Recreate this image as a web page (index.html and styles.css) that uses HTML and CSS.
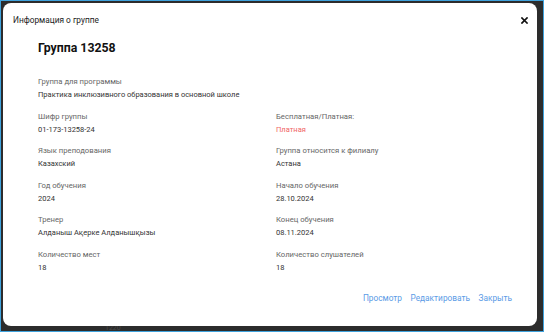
FILE: index.html
```html
<!DOCTYPE html>
<html lang="ru">
<head>
  <meta charset="UTF-8">
  <meta name="viewport" content="width=device-width, initial-scale=1.0">
  <title>Информация о группе</title>
  <link rel="stylesheet" href="styles.css">
</head>
<body>
  <div class="screen">
    <div class="overlay">
      <span class="behind">1220</span>
      <div class="modal">
        <div class="modal-header">
          <span class="modal-title">Информация о группе</span>
          <button class="close-btn" aria-label="Закрыть">
            <svg width="7" height="7" viewBox="0 0 7 7"><path d="M1 1L6 6M6 1L1 6" stroke="#111" stroke-width="1.7" stroke-linecap="square"/></svg>
          </button>
        </div>
        <div class="modal-body">
          <h1 class="group-title">Группа 13258</h1>
          <div class="fields">
            <div class="field full">
              <div class="label">Группа для программы</div>
              <div class="value">Практика инклюзивного образования в основной школе</div>
            </div>
            <div class="field">
              <div class="label">Шифр группы</div>
              <div class="value">01-173-13258-24</div>
            </div>
            <div class="field">
              <div class="label">Бесплатная/Платная:</div>
              <div class="value paid">Платная</div>
            </div>
            <div class="field">
              <div class="label">Язык преподования</div>
              <div class="value">Казахский</div>
            </div>
            <div class="field">
              <div class="label">Группа относится к филиалу</div>
              <div class="value">Астана</div>
            </div>
            <div class="field">
              <div class="label">Год обучения</div>
              <div class="value">2024</div>
            </div>
            <div class="field">
              <div class="label">Начало обучения</div>
              <div class="value">28.10.2024</div>
            </div>
            <div class="field">
              <div class="label">Тренер</div>
              <div class="value">Алданыш Ақерке Алданышқызы</div>
            </div>
            <div class="field">
              <div class="label">Конец обучения</div>
              <div class="value">08.11.2024</div>
            </div>
            <div class="field">
              <div class="label">Количество мест</div>
              <div class="value">18</div>
            </div>
            <div class="field">
              <div class="label">Количество слушателей</div>
              <div class="value">18</div>
            </div>
          </div>
        </div>
        <div class="modal-actions">
          <a href="#" class="action">Просмотр</a>
          <a href="#" class="action">Редактировать</a>
          <a href="#" class="action">Закрыть</a>
        </div>
      </div>
    </div>
  </div>
</body>
</html>
```

FILE: styles.css
```css
body {
  margin: 0;
  padding: 0;
  font-family: Roboto, "Liberation Sans", Arial, sans-serif;
  color: #222;
}
.screen {
  width: 544px;
  height: 332px;
  box-sizing: border-box;
  padding: 1px;
  background: #3fa2dc;
  display: flex;
}
.overlay {
  position: relative;
  flex: 1;
  display: flex;
  padding: 2px 6px 5px 2px;
  background: #2c2c2c;
}
.behind {
  position: absolute;
  left: 104px;
  bottom: -1px;
  font-size: 7px;
  line-height: 7px;
  color: #4a4a4a;
}
.modal {
  position: relative;
  flex: 1;
  display: flex;
  flex-direction: column;
  background: #fff;
  border-radius: 8px;
}
.modal-header {
  display: flex;
  align-items: center;
  justify-content: space-between;
  padding: 10px 9px 10px 10px;
  height: 14px;
}
.modal-title {
  font-size: 8.3px;
  color: #222;
}
.close-btn {
  border: none;
  background: none;
  padding: 0;
  display: flex;
  cursor: pointer;
}
.modal-body {
  padding: 1px 35px 0;
  flex: 1;
}
.group-title {
  margin: 0 0 17px;
  font-size: 12.3px;
  line-height: 20px;
  font-weight: bold;
  color: #111;
}
.fields {
  display: grid;
  grid-template-columns: 1fr 1fr;
  column-gap: 12px;
  row-gap: 8.5px;
}
.field.full {
  grid-column: 1 / 3;
}
.label {
  font-size: 7.7px;
  line-height: 13px;
  color: #666;
}
.value {
  font-size: 7.5px;
  line-height: 13px;
  color: #333;
}
.value.paid {
  color: #f06464;
}
.modal-actions {
  display: flex;
  justify-content: flex-end;
  gap: 8.5px;
  padding: 0 25px 21px 0;
}
.action {
  font-size: 8.3px;
  line-height: 14px;
  color: #5b9be6;
  text-decoration: none;
}
```
